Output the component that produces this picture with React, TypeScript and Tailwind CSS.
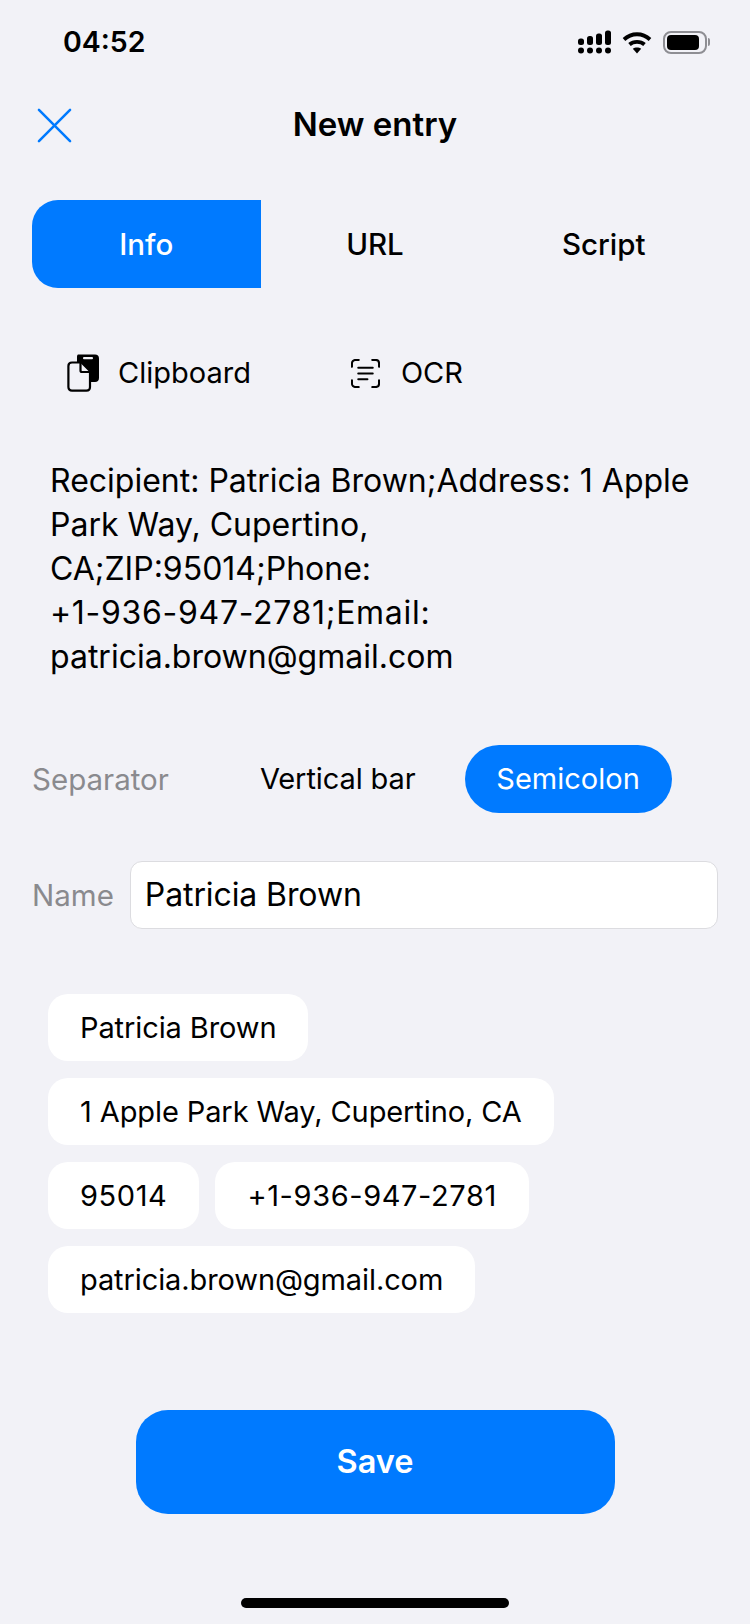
function CloseIcon() {
  return (
    <svg width="35" height="35" viewBox="0 0 36 36" fill="none" stroke="#007aff" strokeWidth="2.6" strokeLinecap="round">
      <path d="M2 2L34 34" />
      <path d="M34 2L2 34" />
    </svg>
  );
}

function SignalIcon() {
  return (
    <svg width="33" height="24" viewBox="0 0 33 24" fill="#000">
      <rect x="0" y="8.5" width="6" height="6.5" rx="2.5" />
      <rect x="9" y="6" width="6" height="9" rx="2.5" />
      <rect x="18" y="3.5" width="6" height="11.5" rx="2.5" />
      <rect x="27" y="0.5" width="6" height="14.5" rx="2.5" />
      <circle cx="3" cy="20.5" r="3" />
      <circle cx="12" cy="20.5" r="3" />
      <circle cx="21" cy="20.5" r="3" />
      <circle cx="30" cy="20.5" r="3" />
    </svg>
  );
}

function WifiIcon() {
  return (
    <svg width="30" height="24" viewBox="0 0 30 24" fill="none" stroke="#000" strokeWidth="3.8">
      <path d="M2 9.5C9.5 2.5 20.5 2.5 28 9.5" />
      <path d="M7.5 14.5C11.5 11 18.5 11 22.5 14.5" />
      <path d="M15 23.5L10.8 18.8C13 17 17 17 19.2 18.8Z" fill="#000" stroke="none" />
    </svg>
  );
}

function BatteryIcon() {
  return (
    <div className="flex items-center">
      <div className="h-[23px] w-[44px] rounded-[8px] border-2 border-[#8e8e93] p-[2px]">
        <div className="h-full w-[32px] rounded-[4px] bg-black" />
      </div>
      <div className="ml-[1px] h-[8px] w-[2px] rounded-r-full bg-[#8e8e93]" />
    </div>
  );
}

function ClipboardIcon() {
  return (
    <svg width="33" height="38" viewBox="0 0 33 38" fill="none">
      <path d="M11 0.5H28C30.5 0.5 32 2 32 4.5V24C32 26.5 30.5 28 28 28H10V3C10 1.5 10.5 0.5 11 0.5Z" fill="#000" />
      <rect x="16" y="3" width="10" height="2.2" rx="1" fill="#f2f2f7" />
      <path d="M5 8.5H14.5L23 17V33C23 35.2 21.6 36.6 19.4 36.6H5C2.8 36.6 1.4 35.2 1.4 33V12C1.4 9.8 2.8 8.5 5 8.5Z" fill="#f2f2f7" stroke="#000" strokeWidth="2.2" strokeLinejoin="round" />
      <path d="M13.5 9V16.5C13.5 17.5 14 18 15 18H22.5" stroke="#000" strokeWidth="2.2" />
    </svg>
  );
}

function OcrIcon() {
  return (
    <svg width="29" height="29" viewBox="0 0 30 30" fill="none" stroke="#000" strokeWidth="2.1" strokeLinecap="round">
      <path d="M1 8V4.5C1 2.5 2.5 1 4.5 1H8" />
      <path d="M22 1H25.5C27.5 1 29 2.5 29 4.5V8" />
      <path d="M29 22V25.5C29 27.5 27.5 29 25.5 29H22" />
      <path d="M8 29H4.5C2.5 29 1 27.5 1 25.5V22" />
      <path d="M7.5 9H22.5" />
      <path d="M7.5 15H22.5" />
      <path d="M7.5 21H17" />
    </svg>
  );
}

function Chip({ label, wide }: { label: string; wide?: boolean }) {
  return (
    <div
      className={[
        "flex h-[67px] items-center rounded-[20px] bg-white px-[32px] text-[29px] text-black",
        wide ? "tracking-[0.6px]" : "tracking-[-0.1px]",
      ].join(" ")}
    >
      {label}
    </div>
  );
}

export default function App() {
  return (
    <div className="flex h-[1624px] w-[750px] flex-col overflow-hidden bg-[#f2f2f7] font-['Inter',sans-serif] text-black">
      {/* status bar */}
      <div className="flex h-[84px] items-center justify-between pl-[63px] pr-[40px]">
        <div className="text-[28.5px] font-semibold">04:52</div>
        <div className="flex items-center gap-[11px]">
          <SignalIcon />
          <WifiIcon />
          <BatteryIcon />
        </div>
      </div>

      {/* header */}
      <div className="relative flex h-[80px] items-center justify-center">
        <div className="absolute left-[37px] top-[24px]">
          <CloseIcon />
        </div>
        <div className="pt-[1px] text-[33px] font-semibold">New entry</div>
      </div>

      {/* tabs */}
      <div className="mx-[32px] mt-[36px] grid h-[88px] grid-cols-3 text-[29.5px] font-medium">
        <div className="flex items-center justify-center rounded-l-[26px] bg-[#007aff] text-white">Info</div>
        <div className="flex items-center justify-center">URL</div>
        <div className="flex items-center justify-center">Script</div>
      </div>

      {/* paste sources */}
      <div className="ml-[67px] mt-[60px] flex h-[50px] items-center text-[29px]">
        <ClipboardIcon />
        <span className="ml-[18px]">Clipboard</span>
        <div className="ml-[100px]">
          <OcrIcon />
        </div>
        <span className="ml-[21px]">OCR</span>
      </div>

      {/* raw text */}
      <div className="ml-[50px] mt-[61px] w-[646px] text-[32px] leading-[44px]">
        Recipient: Patricia Brown;Address: 1 Apple Park Way, Cupertino, CA;ZIP:95014;Phone:{" "}
        <span className="whitespace-nowrap tracking-[0.7px]">+1-936-947-2781;Email:</span> patricia.brown@gmail.com
      </div>

      {/* separator */}
      <div className="ml-[32px] mt-[66px] flex h-[68px] items-center text-[29px]">
        <span className="text-[29.5px] text-[#8a8a8e]">Separator</span>
        <span className="ml-[91px] tracking-[-0.1px]">Vertical bar</span>
        <div className="ml-[49px] flex h-full w-[207px] items-center justify-center rounded-[34px] bg-[#007aff] text-white">
          Semicolon
        </div>
      </div>

      {/* name */}
      <div className="ml-[32px] mr-[32px] mt-[48px] flex items-center">
        <span className="text-[29.5px] text-[#8a8a8e]">Name</span>
        <div className="ml-[16px] flex h-[68px] flex-1 items-center rounded-[12px] border border-[#dcdce0] bg-white px-[14px] text-[32px] tracking-[-0.1px]">
          Patricia Brown
        </div>
      </div>

      {/* parsed chips */}
      <div className="ml-[48px] mt-[65px] flex flex-col items-start gap-[17px]">
        <Chip label="Patricia Brown" />
        <Chip label="1 Apple Park Way, Cupertino, CA" />
        <div className="flex gap-[16px]">
          <Chip label="95014" wide />
          <Chip label="+1-936-947-2781" wide />
        </div>
        <Chip label="patricia.brown@gmail.com" />
      </div>

      <button type="button" className="mx-auto mt-[97px] h-[104px] w-[479px] rounded-[32px] bg-[#007aff] text-[32.5px] font-semibold text-white">
        Save
      </button>

      <div className="mx-auto mt-[84px] h-[10px] w-[268px] rounded-full bg-black" />
    </div>
  );
}
